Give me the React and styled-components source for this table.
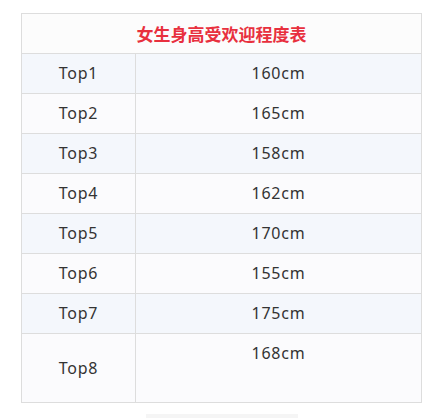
import React from 'react';
import styled, { createGlobalStyle } from 'styled-components';

const GlobalStyle = createGlobalStyle`
  body {
    margin: 0;
    background: #ffffff;
    font-family: "Microsoft YaHei", "Noto Sans", "Noto Sans CJK SC", sans-serif;
  }
`;

const Page = styled.div`
  padding: 13px 0 0 21px;
  width: 444px;
  height: 418px;
  box-sizing: border-box;
  overflow: hidden;
`;

const Table = styled.table`
  width: 401px;
  border-collapse: collapse;
  table-layout: fixed;
  color: #333333;
  font-size: 16px;
`;

const HeadCell = styled.th`
  height: 39px;
  padding: 0;
  border: 1px solid #dddddd;
  background: #fcfcfc;
  color: #e8303e;
  font-size: 17px;
  font-weight: 700;
  font-family: "Noto Sans CJK SC", sans-serif;
  text-align: center;
`;

const Row = styled.tr`
  background: ${({ $odd }) => ($odd ? '#f4f7fc' : '#fbfbfd')};
`;

const Cell = styled.td`
  padding: 5px 10px;
  line-height: 29px;
  border: 1px solid #dddddd;
  text-align: center;
  vertical-align: ${({ $top }) => ($top ? 'top' : 'middle')};
  letter-spacing: 0.8px;
`;

const Footer = styled.div`
  margin: 11px 0 0 125px;
  width: 152px;
  height: 8px;
  background: #f5f5f5;
`;

const rows = [
  ['Top1', '160cm'],
  ['Top2', '165cm'],
  ['Top3', '158cm'],
  ['Top4', '162cm'],
  ['Top5', '170cm'],
  ['Top6', '155cm'],
  ['Top7', '175cm'],
];

export default function App() {
  return (
    <Page>
      <GlobalStyle />
      <Table>
        <colgroup>
          <col style={{ width: '114px' }} />
          <col />
        </colgroup>
        <thead>
          <tr>
            <HeadCell colSpan={2}>女生身高受欢迎程度表</HeadCell>
          </tr>
        </thead>
        <tbody>
          {rows.map(([rank, height], i) => (
            <Row key={rank} $odd={i % 2 === 0}>
              <Cell>{rank}</Cell>
              <Cell>{height}</Cell>
            </Row>
          ))}
          <Row>
            <Cell>Top8</Cell>
            <Cell $top>
              168cm
              <br />
              <br />
            </Cell>
          </Row>
        </tbody>
      </Table>
      <Footer />
    </Page>
  );
}
